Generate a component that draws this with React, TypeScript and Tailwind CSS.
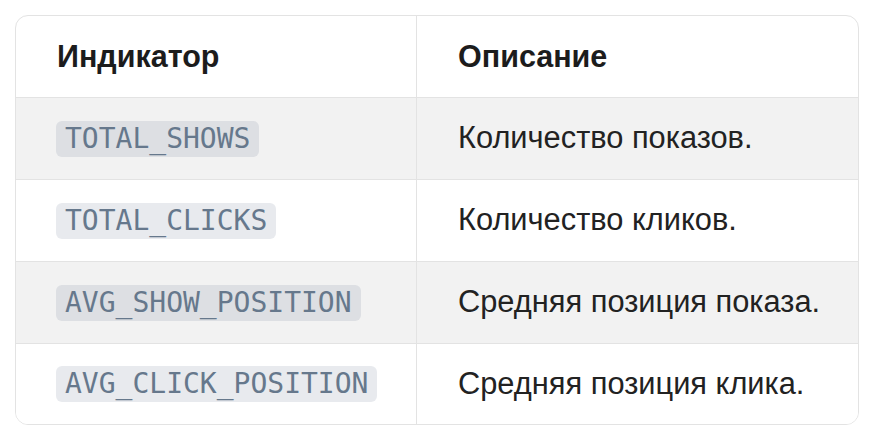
import React from "react";

const rows = [
  { key: "TOTAL_SHOWS", desc: "Количество показов." },
  { key: "TOTAL_CLICKS", desc: "Количество кликов." },
  { key: "AVG_SHOW_POSITION", desc: "Средняя позиция показа." },
  { key: "AVG_CLICK_POSITION", desc: "Средняя позиция клика." },
];

const App = () => {
  return (
    <div className="w-[874px] h-[440px] bg-white pt-[15px] pl-[15px] font-['Liberation_Sans',Arial,sans-serif]">
      <div className="w-[844px] border border-[#e3e3e3] rounded-[13px] overflow-hidden">
        <div className="grid grid-cols-[401px_1fr] h-[81px]">
          <div className="flex items-center pl-[41px] border-r border-[#e3e3e3] text-[30.5px] font-bold text-[#1c1c1c]">
            Индикатор
          </div>
          <div className="flex items-center pl-[41px] text-[30.5px] font-bold text-[#1c1c1c]">
            Описание
          </div>
        </div>
        {rows.map((row, idx) => (
          <div
            key={row.key}
            className={`grid grid-cols-[401px_1fr] h-[82px] last:h-[81px] border-t border-[#e3e3e3] ${
              idx % 2 === 0 ? "bg-[#f2f2f2]" : "bg-white"
            }`}
          >
            <div className="flex items-center pl-[40px] border-r border-[#e3e3e3]">
              <code className="h-[36px] px-[9px] flex items-center rounded-[6px] bg-[rgba(100,116,139,0.15)] text-[#66788c] text-[28px] font-['DejaVu_Sans_Mono',monospace]">
                {row.key}
              </code>
            </div>
            <div className="flex items-center pl-[41px] text-[30.8px] text-[#222]">
              {row.desc}
            </div>
          </div>
        ))}
      </div>
    </div>
  );
};

export default App;
